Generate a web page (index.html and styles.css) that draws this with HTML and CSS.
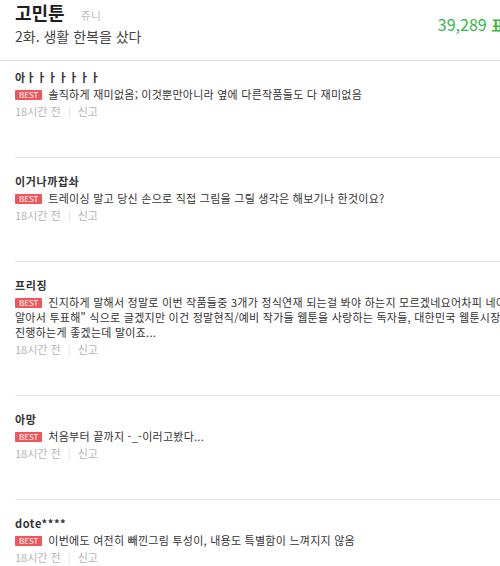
FILE: index.html
```html
<!DOCTYPE html>
<html lang="ko">
<head>
  <meta charset="UTF-8">
  <title>고민툰 - 2화. 생활 한복을 샀다</title>
  <link rel="stylesheet" href="styles.css">
</head>
<body>
<div class="page">

  <div class="header">
    <div class="header-info">
      <h1 class="title">고민툰 <span class="author">쥬니</span></h1>
      <p class="episode">2화. 생활 한복을 샀다</p>
    </div>
    <div class="votes">39,289 <b>표</b></div>
  </div>

  <ul class="comments">
    <li class="comment">
      <div class="nick">아ㅏㅏㅏㅏㅏㅏㅏ</div>
      <p class="text"><span class="best">BEST</span>솔직하게 재미없음; 이것뿐만아니라 옆에 다른작품들도 다 재미없음</p>
      <div class="meta">18시간 전<span class="bar">|</span>신고</div>
    </li>
    <li class="comment">
      <div class="nick">이거나까잡솨</div>
      <p class="text"><span class="best">BEST</span>트레이싱 말고 당신 손으로 직접 그림을 그릴 생각은 해보기나 한것이요?</p>
      <div class="meta">18시간 전<span class="bar">|</span>신고</div>
    </li>
    <li class="comment">
      <div class="nick">프리징</div>
      <p class="text"><span class="best">BEST</span>진지하게 말해서 정말로 이번 작품들중 3개가 정식연재 되는걸 봐야 하는지 모르겠네요어차피 네이버 알아서 투표해" 식으로 글겠지만 이건 정말현직/예비 작가들 웹툰을 사랑하는 독자들, 대한민국 웹툰시장을 진행하는게 좋겠는데 말이죠...</p>
      <div class="meta">18시간 전<span class="bar">|</span>신고</div>
    </li>
    <li class="comment">
      <div class="nick">아망</div>
      <p class="text"><span class="best">BEST</span>처음부터 끝까지 -_-이러고봤다...</p>
      <div class="meta">18시간 전<span class="bar">|</span>신고</div>
    </li>
    <li class="comment">
      <div class="nick">dote****</div>
      <p class="text"><span class="best">BEST</span>이번에도 여전히 빼낀그림 투성이, 내용도 특별함이 느껴지지 않음</p>
      <div class="meta">18시간 전<span class="bar">|</span>신고</div>
    </li>
  </ul>

</div>
</body>
</html>
```

FILE: styles.css
```css
html, body { margin: 0; overflow: hidden; background: #fff; }
body { font-family: "Noto Sans CJK KR", "Noto Sans", sans-serif; color: #222; }
.page { width: 520px; }

.header { display: flex; justify-content: space-between; align-items: center; padding: 1px 15px 14px; border-bottom: 1px solid #dcdcdc; }
.title { margin: 0; font-size: 18px; line-height: 22px; font-weight: bold; color: #1e1e1e; }
.author { margin-left: 11px; font-size: 11px; font-weight: normal; color: #bbb; }
.episode { margin: 0; font-size: 14px; line-height: 20px; color: #444; }
.votes { margin-top: 1px; font-size: 16px; color: #32b846; white-space: nowrap; }
.votes b { font-size: 15px; }

.comments { list-style: none; margin: 0 0 0 15px; padding: 0; }
.comment { padding: 15px 0 38px; border-bottom: 1px solid #e6e6e6; }
.comment:first-child { padding-top: 8px; }
.nick { font-size: 11px; line-height: 16px; font-weight: bold; letter-spacing: 0.6px; color: #333; }
.text { margin: 0; padding-top: 2px; font-size: 11px; line-height: 15px; letter-spacing: 0.25px; color: #333; }
.best { display: inline-block; margin-right: 6px; padding: 0 4px; background: #f0555a; color: #fff; font-size: 8px; line-height: 10px; letter-spacing: 0; vertical-align: 1px; border-radius: 1px; }
.meta { margin-top: 1px; font-size: 11px; line-height: 16px; color: #b4b4b4; }
.bar { margin: 0 7px; color: #e0e0e0; }
```
